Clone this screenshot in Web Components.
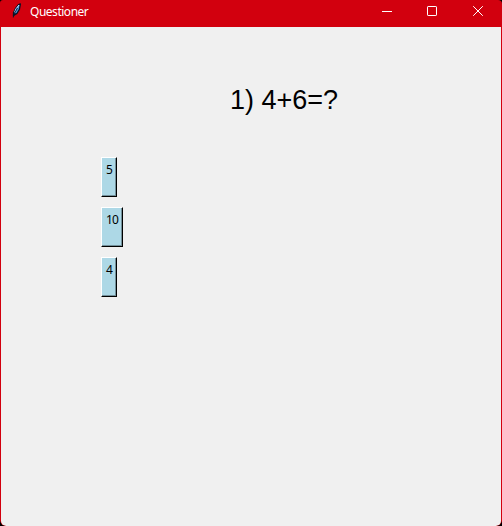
<!DOCTYPE html>
<html lang="en"><head><meta charset="utf-8"><title>Questioner</title>
<style>html,body{margin:0;height:100%;background:#000;overflow:hidden}</style></head><body>
<app-window><title-bar slot="bar">Questioner</title-bar>
<quiz-question>1) 4+6=?
<answer-button slot="answers">5</answer-button><answer-button slot="answers">10</answer-button><answer-button slot="answers">4</answer-button></quiz-question></app-window>
<script>
function define(name, html){
  const t=document.createElement('template');t.innerHTML=html;
  customElements.define(name,class extends HTMLElement{
    constructor(){super();this.attachShadow({mode:'open'}).append(t.content.cloneNode(true));}
  });
}
define('app-window',`<style>
:host{display:flex;flex-direction:column;box-sizing:border-box;width:502px;height:526px;background:#d2000e;border-radius:3px 4px 6px 6px;overflow:hidden}
main{flex:1;margin:0 1px;background:#f0f0f0;border-radius:0 0 5px 5px}
</style><slot name="bar"></slot><main><slot></slot></main>`);
define('title-bar',`<style>
:host{display:flex;height:27px;color:#fff;font:12px/24px "Noto Sans","Open Sans",sans-serif}
.feather{width:14px;height:18px;margin:2px 6px 0 10px;flex:none}
.t{flex:1;letter-spacing:-.48px}
.c{display:flex;width:138px;flex:none}
.c svg{display:block;width:46px;height:24px}
</style>
<svg class="feather" viewBox="0 0 14 18"><path d="M2.8 14.5 2.9 10.5 5 6 8 2.3 10.5 1 11 2.2 10 7.5 7.3 12 4.3 13.8z" fill="#071426"/><path d="M4.2 11.5 5.8 7 8.8 3 9.5 3 8.8 7 6.5 11z" fill="#4d91d8"/><path d="M4.5 10.5 6 6.8 9 3" stroke="#c5e5ff" fill="none"/><path d="M3.3 15.5 4.2 11.5 7.5 6" stroke="#071426" stroke-width=".9" fill="none"/></svg>
<span class="t"><slot></slot></span>
<span class="c">
<svg viewBox="0 0 46 24" fill="none" stroke="#fff"><path d="M18 11.5h10"/></svg>
<svg viewBox="0 0 46 24" fill="none" stroke="#fff"><rect x="17.5" y="6.5" width="9" height="9" rx=".6"/></svg>
<svg viewBox="0 0 46 24" fill="none" stroke="#fff"><path d="M17.2 6.2 26.8 15.8M26.8 6.2 17.2 15.8"/></svg>
</span>`);
define('quiz-question',`<style>
:host{display:block;color:#000;font:27px/31px "Liberation Sans",Arial,sans-serif}
.q{padding:58px 0 0 229px;height:31px;white-space:nowrap}
.a{display:flex;flex-direction:column;align-items:flex-start;gap:10px;padding:41px 0 0 100px}
</style><div class="q"><slot></slot></div><div class="a"><slot name="answers"></slot></div>`);
define('answer-button',`<style>
:host{display:block;box-sizing:border-box;height:40px;background:#add8e6;border:1px solid;border-color:#fff #000 #000 #fff;box-shadow:inset -1px -1px #73909a;padding:4px 4px 0 4px;font:12px/16px "Noto Sans","Open Sans",sans-serif;letter-spacing:-.86px}
</style><slot></slot>`);
</script></body></html>
